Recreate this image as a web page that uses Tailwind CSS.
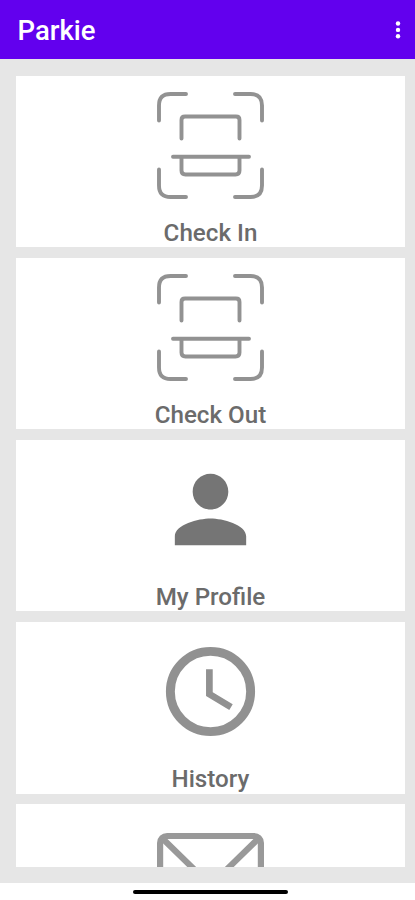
<!DOCTYPE html>
<html lang="en">
<head>
<meta charset="utf-8">
<title>Parkie</title>
<script src="https://cdn.jsdelivr.net/npm/@tailwindcss/browser@4"></script>
</head>
<body class="flex h-[900px] w-[415px] flex-col overflow-hidden bg-white font-['Roboto',sans-serif] font-medium">
<svg class="hidden">
  <symbol id="scan" viewBox="0 0 107 107">
    <g fill="none" stroke="#929292" stroke-width="3.9" stroke-linecap="round" stroke-linejoin="round">
      <path d="M2 28.500V13.500Q2 2 13.500 2H29M78 2H93.500Q105 2 105 13.500V28.500M105 77.500V93.500Q105 105 93.500 105H78M29 105H13.500Q2 105 2 93.500V77.500"/>
      <path d="M24.500 46.500V28Q24.500 24.500 28 24.500H79Q82.500 24.500 82.500 28V46.500M24.500 65V78.500Q24.500 82.500 28.500 82.500H78.500Q82.500 82.500 82.500 78.500V65M16 64.800H92"/>
    </g>
  </symbol>
</svg>
<header class="flex h-[59px] shrink-0 items-center justify-between bg-[#6200ee] pl-[17.500px] pr-[14px] text-white">
  <h1 class="pt-[3px] text-[27.500px] leading-[32px]">Parkie</h1>
  <svg class="mt-px h-[20px] w-[6px]" viewBox="0 0 6 20" fill="white"><circle cx="3" cy="3.500" r="2.200"/><circle cx="3" cy="9.900" r="2.200"/><circle cx="3" cy="16.300" r="2.200"/></svg>
</header>
<main class="flex h-[823.500px] shrink-0 flex-col bg-[#e6e6e6] pb-[15.500px] pl-[16px] pr-[10px] pt-[16.500px] text-[24.200px] leading-[28px] text-[#6b6b6b]">
  <div class="flex min-h-0 flex-1 flex-col gap-[10.600px] overflow-hidden">
    <section class="flex h-[171.600px] shrink-0 flex-col items-center bg-white pt-[16px]">
      <svg class="size-[107px] shrink-0"><use href="#scan"/></svg>
      <h2 class="mt-[20px]">Check In</h2>
    </section>
    <section class="flex h-[171.600px] shrink-0 flex-col items-center bg-white pt-[16px]">
      <svg class="size-[107px] shrink-0"><use href="#scan"/></svg>
      <h2 class="mt-[20px]">Check Out</h2>
    </section>
    <section class="flex h-[171.600px] shrink-0 flex-col items-center bg-white pt-[16px]">
      <svg class="size-[107px] shrink-0" viewBox="0 0 24 24" fill="#757575"><path d="M12 12c2.210 0 4-1.790 4-4s-1.790-4-4-4-4 1.790-4 4 1.790 4 4 4zm0 2c-2.670 0-8 1.340-8 4v2h16v-2c0-2.660-5.330-4-8-4z"/></svg>
      <h2 class="mt-[20px]">My Profile</h2>
    </section>
    <section class="flex h-[171.600px] shrink-0 flex-col items-center bg-white pt-[16px]">
      <svg class="size-[107px] shrink-0" viewBox="0 0 24 24" fill="none" stroke="#919191"><circle cx="12" cy="12" r="9" stroke-width="2"/><path stroke-width="1.500" d="M11.750 7V12.600L16.600 15.500"/></svg>
      <h2 class="mt-[20px]">History</h2>
    </section>
    <section class="flex h-[171.600px] shrink-0 flex-col items-center bg-white pt-[16px]">
      <svg class="size-[107px] shrink-0" viewBox="0 0 107 107" fill="none" stroke="#999" stroke-width="6.200"><rect x="3.100" y="16" width="100.800" height="75" rx="7"/><path d="M5.500 18.500L46 58Q53.500 64 61 58L101.500 18.500"/></svg>
    </section>
  </div>
</main>
<footer class="flex flex-1 justify-center pl-[6px] pt-[7px]">
  <div class="h-[4px] w-[155px] rounded-full bg-black"></div>
</footer>
</body>
</html>
